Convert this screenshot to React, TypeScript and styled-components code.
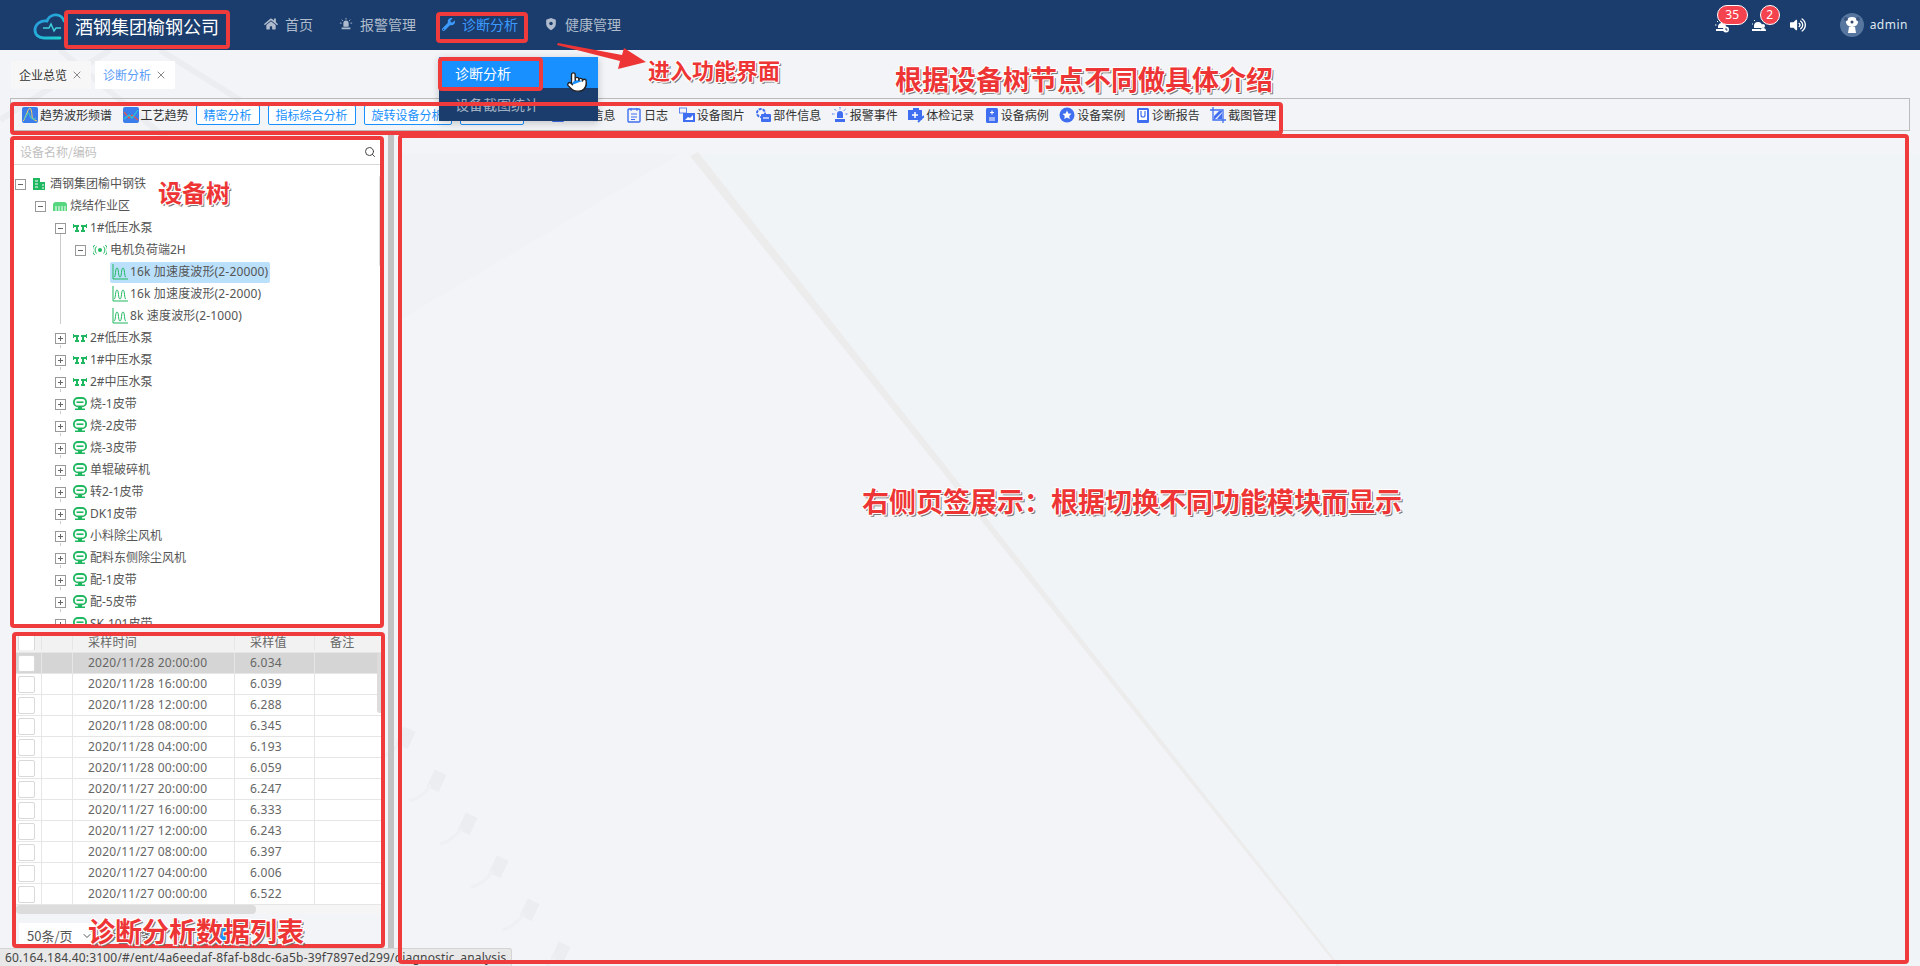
import React, { ReactNode } from 'react'
import styled, { createGlobalStyle } from 'styled-components'
import { FaHome, FaWrench, FaVolumeUp } from 'react-icons/fa'
import { Pointer, Search, X, ChevronDown } from 'lucide-react'

const FONT = '"Noto Sans", "Noto Sans CJK SC", "Liberation Sans", sans-serif'
const CJK = '"Noto Sans CJK SC", sans-serif'
const NAVY = '#1a3d6d'
const BLUE = '#1890ff'
const ICON = '#3f6ff0'
const GREEN = '#1fb75f'

const GlobalStyle = createGlobalStyle`
  html, body { margin: 0; padding: 0; background: #f2f4f8; }
  * { box-sizing: border-box; }
`

const Page = styled.div`
  position: relative;
  width: 1920px;
  height: 966px;
  overflow: hidden;
  display: flex;
  flex-direction: column;
  font-family: ${FONT};
  font-size: 12px;
  line-height: 1;
  background: #f2f4f8;
`

const Backdrop = styled.svg`
  position: absolute;
  inset: 0;
`

// header
const Header = styled.header`
  position: relative;
  z-index: 2;
  flex: none;
  height: 50px;
  display: flex;
  align-items: center;
  padding-left: 32px;
  background: ${NAVY};
`
const Title = styled.div`
  width: 176px;
  padding-top: 2px;
  font-family: ${CJK};
  font-size: 18px;
  color: #fff;
`
const Nav = styled.nav`
  display: flex;
`
const NavItem = styled.div<{ $active?: boolean }>`
  display: flex;
  align-items: center;
  gap: 7px;
  height: 50px;
  padding: 0 13px 2px;
  font-family: ${CJK};
  font-size: 14px;
  color: ${p => (p.$active ? '#3d9bff' : 'rgba(255,255,255,.66)')};
`
const HeaderRight = styled.div`
  margin-left: auto;
  display: flex;
  align-items: center;
  padding-right: 12px;
`
const AlarmSlot = styled.div<{ $w: number }>`
  position: relative;
  width: ${p => p.$w}px;
  height: 24px;
  display: flex;
  align-items: center;
`
const Badge = styled.span<{ $left: number; $w: number }>`
  position: absolute;
  left: ${p => p.$left}px;
  top: -8px;
  width: ${p => p.$w}px;
  height: 20px;
  border-radius: 10px;
  background: #f5424f;
  border: 1px solid #fff;
  color: #fff;
  font-size: 12px;
  display: flex;
  align-items: center;
  justify-content: center;
`
const Avatar = styled.span`
  width: 24px;
  height: 24px;
  border-radius: 50%;
  margin: 0 6px 0 34px;
  background: #56759f;
  display: flex;
  align-items: center;
  justify-content: center;
`
const UserName = styled.span`
  color: #dfe7f1;
  font-size: 12px;
  letter-spacing: 0.5px;
`

// dropdown from the nav
const Dropdown = styled.div`
  position: absolute;
  z-index: 3;
  left: 439px;
  top: 57px;
  width: 159px;
  height: 64px;
  background: ${NAVY};
  box-shadow: 0 2px 8px rgba(0, 0, 0, 0.2);
  font-family: ${CJK};
  font-size: 14px;
`
const DropItem = styled.div<{ $active?: boolean }>`
  height: 31px;
  padding-left: 16px;
  display: flex;
  align-items: center;
  color: ${p => (p.$active ? '#fff' : 'rgba(255,255,255,.6)')};
  background: ${p => (p.$active ? BLUE : 'transparent')};
`
const HandCursor = styled.span`
  position: absolute;
  z-index: 6;
  left: 566px;
  top: 71px;
  display: flex;
`

// tabs
const TabBar = styled.div`
  position: relative;
  flex: none;
  display: flex;
  gap: 4px;
  padding: 11px 0 0 11px;
  height: 39px;
`
const Tab = styled.div<{ $active?: boolean }>`
  width: 80px;
  height: 28px;
  display: flex;
  align-items: center;
  justify-content: space-between;
  padding: 0 8px;
  font-family: ${CJK};
  background: ${p => (p.$active ? '#fff' : '#f7f7f7')};
  color: ${p => (p.$active ? '#5a9cf8' : '#333')};
  svg {
    color: #888;
  }
`

// toolbar
const Toolbar = styled.div`
  position: relative;
  flex: none;
  margin: 9px 10px 0;
  height: 33px;
  display: flex;
  align-items: center;
  padding-left: 11px;
  border: 1px solid #bbb;
  font-family: ${CJK};
  color: #333;
`
const ToolItem = styled.div<{ $gap?: number; $push?: number }>`
  display: flex;
  align-items: center;
  gap: 2px;
  margin-right: ${p => p.$gap ?? 10.5}px;
  margin-left: ${p => p.$push ?? 0}px;
  white-space: nowrap;
`
const ToolButton = styled.div`
  height: 20px;
  padding: 0 7px;
  margin-right: 8px;
  display: flex;
  align-items: center;
  border: 1px solid ${BLUE};
  border-radius: 2px;
  color: ${BLUE};
  background: #fff;
  white-space: nowrap;
`

// main row
const Main = styled.main`
  position: relative;
  flex: 1;
  display: flex;
  padding-left: 14px;
  min-height: 0;
`
const LeftPane = styled.div`
  width: 374px;
  display: flex;
  flex-direction: column;
`
const Splitter = styled.div`
  width: 6px;
  height: 815px;
  margin-top: 2px;
  background: #c2c2c2;
`
const TreePane = styled.section`
  height: 486px;
  width: 366px;
  margin-top: 9px;
  background: #fff;
  display: flex;
  flex-direction: column;
  position: relative;
`
const SearchBox = styled.div`
  flex: none;
  height: 25px;
  display: flex;
  align-items: center;
  justify-content: space-between;
  padding: 0 4px 0 6px;
  border-bottom: 1px solid #d9d9d9;
  color: #bfbfbf;
  font-family: ${CJK};
  svg {
    color: #444;
  }
`
const TreeBody = styled.div`
  flex: 1;
  overflow: hidden;
  padding-top: 8px;
  position: relative;
  margin-left: -14px;
  padding-left: 0;
`
const TreeRow = styled.div<{ $level: number }>`
  height: 22px;
  display: flex;
  align-items: center;
  padding-left: ${p => 15 + 20 * p.$level}px;
  color: #555;
  white-space: nowrap;
`
const ExpandBox = styled.span<{ $open: boolean }>`
  position: relative;
  flex: none;
  width: 11px;
  height: 11px;
  margin-right: 7px;
  border: 1px solid #999;
  background: #fff;
  &::before {
    content: '';
    position: absolute;
    left: 2px;
    top: 4px;
    width: 5px;
    height: 1px;
    background: #666;
  }
  &::after {
    content: '';
    position: absolute;
    display: ${p => (p.$open ? 'none' : 'block')};
    left: 4px;
    top: 2px;
    width: 1px;
    height: 5px;
    background: #666;
  }
`
const Guide = styled.span<{ $h: number; $left: number }>`
  position: absolute;
  left: ${p => p.$left}px;
  top: 17px;
  width: 1px;
  height: ${p => p.$h}px;
  background: #ccc;
`
const RowDots = styled.span<{ $left: number }>`
  position: absolute;
  left: ${p => p.$left}px;
  top: 18px;
  width: 1px;
  height: 3px;
  background: #ccc;
`
const RowWrap = styled.div`
  position: relative;
`
const IconSlot = styled.span`
  flex: none;
  width: 16px;
  height: 16px;
  margin-right: 1px;
  display: flex;
  align-items: center;
`
const Leaf = styled.div<{ $selected?: boolean }>`
  display: flex;
  align-items: center;
  gap: 2px;
  height: 21px;
  margin-left: 95px;
  padding: 0 2px;
  border-radius: 2px;
  letter-spacing: 0.15px;
  color: #555;
  background: ${p => (p.$selected ? '#bae0fb' : 'transparent')};
`
const ScrollThumb = styled.span<{ $top: number; $left: number; $h: number; $w?: number }>`
  position: absolute;
  top: ${p => p.$top}px;
  left: ${p => p.$left}px;
  width: ${p => p.$w ?? 6}px;
  height: ${p => p.$h}px;
  border-radius: 3px;
  background: #dcdcdc;
`

// table
const TablePane = styled.section`
  position: relative;
  margin-top: 9px;
  margin-left: 2px;
  width: 367px;
  height: 313px;
  display: flex;
  flex-direction: column;
`
const Row = styled.div<{ $head?: boolean; $selected?: boolean }>`
  flex: none;
  height: ${p => (p.$head ? 18 : 21)}px;
  padding-bottom: ${p => (p.$head ? 2 : 0)}px;
  display: grid;
  grid-template-columns: 26px 31px 162px 80px 1fr;
  border-bottom: 1px solid #e6e6e6;
  background: ${p => (p.$head ? '#f2f2f2' : p.$selected ? '#d5d5d5' : '#fff')};
  color: #666;
`
const Cell = styled.div<{ $pad?: number }>`
  display: flex;
  align-items: center;
  padding-left: ${p => p.$pad ?? 15}px;
  border-right: 1px solid #e6e6e6;
  overflow: hidden;
  font-family: ${FONT};
  letter-spacing: 0.25px;
`
const LastCell = styled(Cell)`
  border-right: none;
`
const CheckBox = styled.span`
  width: 17px;
  height: 17px;
  background: #fff;
  border: 1px solid #d9d9d9;
  border-radius: 2px;
`
const HScroll = styled.div`
  flex: none;
  height: 9px;
  background: #f5f5f5;
`
const HThumb = styled.div`
  width: 240px;
  height: 9px;
  border-radius: 4px;
  background: #dcdcdc;
`
const Pager = styled.div`
  flex: 1;
  display: flex;
  align-items: center;
  padding: 9px 0 0 3px;
  color: #555;
  font-family: ${CJK};
`
const PageSize = styled.div`
  width: 78px;
  height: 25px;
  display: flex;
  align-items: center;
  justify-content: space-between;
  padding: 0 4px 0 8px;
  font-size: 13px;
  background: #fff;
`
const PageTotal = styled.span`
  margin-left: 13px;
  width: 87px;
`
const PageCurrent = styled.span`
  width: 30px;
  height: 25px;
  background: ${BLUE};
  color: #fff;
  display: flex;
  align-items: center;
  justify-content: center;
`
const RightPane = styled.section`
  flex: 1;
`

// browser status bubble
const StatusBar = styled.div`
  position: absolute;
  z-index: 4;
  left: 0;
  bottom: 0;
  width: 512px;
  height: 18px;
  padding-left: 5px;
  display: flex;
  align-items: center;
  background: #e8e8e8;
  border: 1px solid #d4d4d4;
  border-left: none;
  border-bottom: none;
  border-top-right-radius: 3px;
  color: #444;
  font-size: 12px;
  letter-spacing: 0.19px;
  white-space: nowrap;
`

// the red markup drawn over the screenshot
const RedFrame = styled.div<{ $x: number; $y: number; $w: number; $h: number }>`
  position: absolute;
  z-index: 5;
  left: ${p => p.$x}px;
  top: ${p => p.$y}px;
  width: ${p => p.$w}px;
  height: ${p => p.$h}px;
  border: 4px solid #ef3b3b;
  border-radius: 4px;
  pointer-events: none;
`
const Note = styled.div<{ $x: number; $y: number; $size: number }>`
  position: absolute;
  z-index: 6;
  left: ${p => p.$x}px;
  top: ${p => p.$y}px;
  font-family: ${CJK};
  font-weight: 700;
  font-size: ${p => p.$size}px;
  line-height: 1;
  white-space: nowrap;
  color: #ee3535;
  text-shadow:
    -1px -1px 0 #fff, 1px -1px 0 #fff, -1px 1px 0 #fff, 1px 1px 0 #fff,
    2px 2px 0 #777;
`
const Arrow = styled.svg`
  position: absolute;
  z-index: 6;
  left: 556px;
  top: 40px;
`

// icons
const Svg = ({ children, w = 16, h = 16, vb = '0 0 16 16' }: { children: ReactNode; w?: number; h?: number; vb?: string }) => (
  <svg width={w} height={h} viewBox={vb} fill="none">
    {children}
  </svg>
)

const LogoMark = () => (
  <svg width={43} height={28} viewBox="0 0 43 28" fill="none" style={{ flex: 'none', marginTop: 3 }}>
    <defs>
      <linearGradient id="logo" x1="0" y1="0" x2="1" y2="1">
        <stop offset="0" stopColor="#2a8fe0" />
        <stop offset="1" stopColor="#1fd6d0" />
      </linearGradient>
    </defs>
    <path d="M32 8c-1-4-5-7-10-6-4 1-6 3-7 6-6-1-12 3-12 9 0 5 4 8 9 8h16" stroke="url(#logo)" strokeWidth="2.800" strokeLinecap="round" />
    <path d="M11 15h6l2-4 3 7 2-3h5" stroke="#3fd0dc" strokeWidth="1.500" />
  </svg>
)
const SirenNav = () => (
  <Svg w={14} h={14}>
    <path d="M5 7a3 3 0 0 1 6 0v4H5z M3 12h10v2H3z" fill="rgba(255,255,255,.66)" />
    <path d="M8 1v2M3 3l1.500 1.500M13 3l-1.500 1.500M1 7h2M13 7h2" stroke="rgba(255,255,255,.66)" />
  </Svg>
)
const ShieldNav = () => (
  <Svg w={14} h={14}>
    <path d="M8 1l5.500 2v5c0 3-2.500 5.500-5.500 7-3-1.500-5.500-4-5.500-7V3z" fill="rgba(255,255,255,.66)" />
    <circle cx="8" cy="7.500" r="2" fill={NAVY} />
  </Svg>
)
const AlarmClock = () => (
  <Svg>
    <path d="M4 10a4 4 0 0 1 8 0v1H4zM2 12h9v2H2z" fill="#fff" />
    <circle cx="12" cy="12.500" r="3" fill="#fff" />
    <path d="M12 11v2h1.500" stroke={NAVY} />
    <path d="M1 8h1.500M3 4l1 1" stroke="#fff" />
  </Svg>
)
const AlarmUser = () => (
  <Svg>
    <path d="M3 9a4 4 0 0 1 8 0v2H3zM1 12h8v2H1z" fill="#fff" />
    <circle cx="12" cy="9" r="2" fill="#fff" />
    <path d="M9 14a3 3 0 0 1 6 0z" fill="#fff" />
    <path d="M1 7h1M3 3l1 1" stroke="#fff" />
  </Svg>
)
const AvatarFace = () => (
  <Svg w={18} h={20} vb="0 0 18 20">
    <ellipse cx="9" cy="7" rx="6" ry="5" fill="#fff" />
    <circle cx="3" cy="4" r="2" fill="#3b5680" />
    <circle cx="15" cy="4" r="2" fill="#3b5680" />
    <circle cx="9" cy="7" r="1.500" fill="#33486a" />
    <path d="M6 12h6l1 6H5z" fill="#fff" />
  </Svg>
)

const TrendIcon = () => (
  <Svg>
    <rect width="16" height="16" rx="2" fill="#3b7dea" />
    <path d="M1 14c2-1 2-5 4-8 1-3 2-5 3-5s2 5 2 8 2 4 5 5" stroke="#f4d35e" strokeWidth="1" />
    <path d="M2 12c2-2 3-5 4-6s2 4 3 5 3 2 5 0" stroke="#3fd7c0" strokeWidth="1" />
  </Svg>
)
const ProcessIcon = () => (
  <Svg>
    <rect width="16" height="16" rx="2" fill="#3b7dea" />
    <path d="M1 5l5 6 3-3 6 5" stroke="#e4574c" strokeWidth="1.200" />
    <path d="M1 12l5-4 3 3 6-8" stroke="#25c7d9" strokeWidth="1.200" />
  </Svg>
)
const BaseIcon = () => (
  <Svg>
    <rect x="2" y="1" width="12" height="14" rx="1" fill={ICON} />
  </Svg>
)
const LogIcon = () => (
  <Svg>
    <rect x="2" y="2" width="12" height="13" rx="1" stroke={ICON} strokeWidth="1.400" />
    <path d="M5 1v3M11 1v3M5 7h6M5 10h6M5 12.500h4" stroke={ICON} />
  </Svg>
)
const PictureIcon = () => (
  <Svg>
    <rect x="0.500" y="1" width="7" height="5" fill="none" stroke={ICON} strokeWidth="0.800" />
    <path d="M4 6h12v9H4z" fill={ICON} />
    <path d="M6 13l3-3 2 1 3-3v5z" fill="#fff" />
  </Svg>
)
const PartIcon = () => (
  <Svg>
    <circle cx="6" cy="6" r="4" stroke={ICON} strokeWidth="2" strokeDasharray="3 1" />
    <rect x="6" y="7" width="10" height="8" rx="1" fill={ICON} />
    <path d="M8 11h6" stroke="#fff" strokeWidth="1.200" />
  </Svg>
)
const AlarmIcon = () => (
  <Svg>
    <path d="M5 11V7a3 3 0 0 1 6 0v4z M3 12h10v3H3z" fill={ICON} />
    <path d="M8 0v2.500M2.500 2l2 2M13.500 2l-2 2M0 7h2.500M13.500 7H16" stroke={ICON} strokeDasharray="1.500 .5" />
  </Svg>
)
const CheckupIcon = () => (
  <Svg>
    <path d="M5 3V1h6v2M0 3h14v10H0z" fill={ICON} />
    <path d="M7 5v6M4 8h6" stroke="#fff" strokeWidth="1.500" />
    <path d="M10 15l6-6" stroke={ICON} strokeWidth="1.800" />
  </Svg>
)
const CaseBookIcon = () => (
  <Svg w={14} vb="0 0 14 16">
    <rect x="1" y="1" width="12" height="15" rx="1.500" fill={ICON} />
    <path d="M5 5.500h4M7 3.500v4M4 11h6M4 13h6" stroke="#fff" strokeWidth="1.100" />
  </Svg>
)
const StarIcon = () => (
  <Svg>
    <circle cx="8" cy="8" r="7.500" fill={ICON} />
    <path d="M8 3.500l1.400 2.900 3.100.400-2.300 2.100.600 3.100L8 10.500l-2.800 1.500.600-3.100-2.300-2.100 3.100-.400z" fill="#fff" />
  </Svg>
)
const ReportIcon = () => (
  <Svg w={14} vb="0 0 14 16">
    <rect x="1" y="1" width="12" height="15" rx="1.500" fill={ICON} />
    <rect x="3" y="3" width="8" height="10" fill="#fff" />
    <path d="M5 4v4a2 2 0 0 0 4 0V4" stroke={ICON} strokeWidth="1.200" />
  </Svg>
)
const CropIcon = () => (
  <Svg>
    <path d="M3 0v13h13M0 3h13v13" stroke={ICON} strokeWidth="1.300" />
    <path d="M4 13V9l5-5h3v1z M12 6v6H7z" fill={ICON} />
  </Svg>
)

const PlantIcon = () => (
  <Svg w={12} h={14} vb="0 0 12 14">
    <path d="M0 1h7v12H0zM7 5h5v8H7z" fill={GREEN} />
    <path d="M2 4h3M2 7h3M2 10h3M9 8h2M9 11h2" stroke="#fff" />
  </Svg>
)
const AreaIcon = () => (
  <Svg w={14} h={10} vb="0 0 14 10">
    <path d="M0 10V4a3 3 0 0 1 3-3h8a3 3 0 0 1 3 3v6z" fill="#55d67f" />
    <path d="M3 5v5M6 5v5M9 5v5M12 5v5" stroke="#fff" />
  </Svg>
)
const PumpIcon = () => (
  <Svg w={14} h={10} vb="0 0 14 10">
    <path d="M0 1h1v1h5v2H5v3h1v2H2V7h1V4H1v1H0zM8 2h5V1h1v4h-1V4h-2v3h1v2H8V7h1V4H8z" fill={GREEN} />
  </Svg>
)
const SensorIcon = () => (
  <Svg w={14} h={10} vb="0 0 14 10">
    <circle cx="7" cy="5" r="2" fill={GREEN} />
    <path d="M3.500 1.500a5 5 0 0 0 0 7M10.500 1.500a5 5 0 0 1 0 7M1.500 0a8 8 0 0 0 0 10M12.500 0a8 8 0 0 1 0 10" stroke={GREEN} strokeWidth="1" />
  </Svg>
)
const WaveIcon = () => (
  <Svg>
    <path d="M1 0v15h15" stroke={GREEN} />
    <path d="M2 13c2 0 1-9 3-9s1 9 3 9 1-9 3-9 1 9 3 9" stroke={GREEN} />
  </Svg>
)
const BeltIcon = () => (
  <Svg w={14} h={14} vb="0 0 14 14">
    <rect x="0.900" y="1" width="12.200" height="8.400" rx="4" stroke={GREEN} strokeWidth="1.800" />
    <path d="M3.500 5.200h7" stroke={GREEN} strokeWidth="1.600" />
    <path d="M5 9.500h4v2h3v1.500H2v-1.500h3z" fill={GREEN} />
  </Svg>
)

type TreeItem = { level: number; label: string; icon: ReactNode; open?: boolean; guide?: number }

const treeTop: TreeItem[] = [
  { level: 0, label: '酒钢集团榆中钢铁', icon: <PlantIcon />, open: true },
  { level: 1, label: '烧结作业区', icon: <AreaIcon />, open: true },
  { level: 2, label: '1#低压水泵', icon: <PumpIcon />, open: true, guide: 90 },
  { level: 3, label: '电机负荷端2H', icon: <SensorIcon />, open: true },
]
const leaves = ['16k 加速度波形(2-20000)', '16k 加速度波形(2-2000)', '8k 速度波形(2-1000)']
const treeRest: TreeItem[] = [
  { level: 2, label: '2#低压水泵', icon: <PumpIcon /> },
  { level: 2, label: '1#中压水泵', icon: <PumpIcon /> },
  { level: 2, label: '2#中压水泵', icon: <PumpIcon /> },
  ...['烧-1皮带', '烧-2皮带', '烧-3皮带', '单辊破碎机', '转2-1皮带', 'DK1皮带', '小料除尘风机', '配料东侧除尘风机', '配-1皮带', '配-5皮带', 'SK-101皮带'].map(label => ({
    level: 2,
    label,
    icon: <BeltIcon />,
  })),
]

const samples = [
  ['2020/11/28 20:00:00', '6.034'],
  ['2020/11/28 16:00:00', '6.039'],
  ['2020/11/28 12:00:00', '6.288'],
  ['2020/11/28 08:00:00', '6.345'],
  ['2020/11/28 04:00:00', '6.193'],
  ['2020/11/28 00:00:00', '6.059'],
  ['2020/11/27 20:00:00', '6.247'],
  ['2020/11/27 16:00:00', '6.333'],
  ['2020/11/27 12:00:00', '6.243'],
  ['2020/11/27 08:00:00', '6.397'],
  ['2020/11/27 04:00:00', '6.006'],
  ['2020/11/27 00:00:00', '6.522'],
]

const TreeNode = ({ item }: { item: TreeItem }) => (
  <RowWrap>
    <TreeRow $level={item.level}>
      <ExpandBox $open={!!item.open} />
      <IconSlot>{item.icon}</IconSlot>
      {item.label}
    </TreeRow>
    {item.guide && <Guide $h={item.guide} $left={20 + 20 * item.level} />}
    {item.level === 2 && !item.open && <RowDots $left={60} />}
  </RowWrap>
)

export default function App() {
  return (
    <Page>
      <GlobalStyle />
      <Backdrop width={1920} height={966}>
        <polygon points="693,154 1920,154 1920,966 1340,966" fill="#f0f4f7" />
        <polygon points="400,320 680,154 400,154" fill="#f0f2f5" />
        <polygon points="690,156 698,152 1340,966 1337,966" fill="#edecec" />
        {[0, 1, 2, 3, 4, 5].map(i => (
          <g key={i}>
            <rect x={399 + i * 31} y={728 + i * 43} width={13} height={19} fill="#ebedf0" transform={`rotate(25 ${405 + i * 31} ${738 + i * 43})`} />
            <path d={`M${400 + i * 31} ${742 + i * 43}c-6 8-12 14-22 16`} stroke="#eef0f3" strokeWidth="3" fill="none" />
          </g>
        ))}
        <path d="M60 50L240 200M240 100L160 50M0 120L110 50" stroke="#ecedf1" strokeWidth="6" fill="none" />
      </Backdrop>

      <Header>
        <LogoMark />
        <Title>酒钢集团榆钢公司</Title>
        <Nav>
          <NavItem><FaHome size={14} />首页</NavItem>
          <NavItem><SirenNav />报警管理</NavItem>
          <NavItem $active><FaWrench size={13} />诊断分析</NavItem>
          <NavItem><ShieldNav />健康管理</NavItem>
        </Nav>
        <HeaderRight>
          <AlarmSlot $w={37}>
            <AlarmClock />
            <Badge $left={3} $w={31}>35</Badge>
          </AlarmSlot>
          <AlarmSlot $w={39}>
            <AlarmUser />
            <Badge $left={9} $w={20}>2</Badge>
          </AlarmSlot>
          <FaVolumeUp size={16} color="#fff" />
          <Avatar><AvatarFace /></Avatar>
          <UserName>admin</UserName>
        </HeaderRight>
      </Header>

      <TabBar>
        <Tab>企业总览<X size={12} /></Tab>
        <Tab $active>诊断分析<X size={12} /></Tab>
      </TabBar>

      <Toolbar>
        <ToolItem><TrendIcon />趋势波形频谱</ToolItem>
        <ToolItem $gap={7}><ProcessIcon />工艺趋势</ToolItem>
        <ToolButton>精密分析</ToolButton>
        <ToolButton>指标综合分析</ToolButton>
        <ToolButton>旋转设备分析</ToolButton>
        <ToolButton>趋势分析</ToolButton>
        <ToolItem $push={18}><BaseIcon />设备信息</ToolItem>
        <ToolItem><LogIcon />日志</ToolItem>
        <ToolItem><PictureIcon />设备图片</ToolItem>
        <ToolItem><PartIcon />部件信息</ToolItem>
        <ToolItem><AlarmIcon />报警事件</ToolItem>
        <ToolItem><CheckupIcon />体检记录</ToolItem>
        <ToolItem><CaseBookIcon />设备病例</ToolItem>
        <ToolItem><StarIcon />设备案例</ToolItem>
        <ToolItem><ReportIcon />诊断报告</ToolItem>
        <ToolItem><CropIcon />截图管理</ToolItem>
      </Toolbar>

      <Main>
        <LeftPane>
          <TreePane>
            <SearchBox>设备名称/编码<Search size={12} /></SearchBox>
            <TreeBody>
              {treeTop.map(item => <TreeNode key={item.label} item={item} />)}
              {leaves.map((label, i) => (
                <TreeRow key={label} $level={0}>
                  <Leaf $selected={i === 0}><WaveIcon />{label}</Leaf>
                </TreeRow>
              ))}
              {treeRest.map(item => <TreeNode key={item.label} item={item} />)}
              <ScrollThumb $top={10} $left={379} $h={92} />
            </TreeBody>
          </TreePane>
          <TablePane>
            <Row $head>
              <Cell $pad={2}><CheckBox /></Cell>
              <Cell />
              <Cell>采样时间</Cell>
              <Cell>采样值</Cell>
              <LastCell>备注</LastCell>
            </Row>
            {samples.map(([time, value], i) => (
              <Row key={time} $selected={i === 0}>
                <Cell $pad={2}><CheckBox /></Cell>
                <Cell />
                <Cell>{time}</Cell>
                <Cell>{value}</Cell>
                <LastCell />
              </Row>
            ))}
            <HScroll><HThumb /></HScroll>
            <Pager>
              <PageSize>50条/页<ChevronDown size={12} /></PageSize>
              <PageTotal>共 50 条</PageTotal>
              <PageCurrent>1</PageCurrent>
            </Pager>
            <ScrollThumb $top={18} $left={361} $h={60} />
          </TablePane>
        </LeftPane>
        <Splitter />
        <RightPane />
      </Main>

      <Dropdown>
        <DropItem $active>诊断分析</DropItem>
        <DropItem>设备截图统计</DropItem>
      </Dropdown>
      <HandCursor><Pointer size={22} fill="#fff" color="#222" strokeWidth={1.500} /></HandCursor>

      <StatusBar>60.164.184.40:3100/#/ent/4a6eedaf-8faf-b8dc-6a5b-39f7897ed299/diagnostic_analysis</StatusBar>

      <RedFrame $x={64} $y={10} $w={166} $h={39} />
      <RedFrame $x={436} $y={12} $w={92} $h={31} />
      <RedFrame $x={438} $y={57} $w={105} $h={34} />
      <RedFrame $x={10} $y={102} $w={1273} $h={33} />
      <RedFrame $x={10} $y={136} $w={374} $h={492} />
      <RedFrame $x={12} $y={632} $w={373} $h={316} />
      <RedFrame $x={398} $y={134} $w={1511} $h={830} />

      <Arrow width={92} height={30} viewBox="0 0 92 30">
        <polygon points="2,3 66,15 68,8 90,22 62,29 64,21 1,5" fill="#ee3535" />
      </Arrow>
      <Note $x={648} $y={58} $size={22}>进入功能界面</Note>
      <Note $x={895} $y={65} $size={27}>根据设备树节点不同做具体介绍</Note>
      <Note $x={158} $y={180} $size={24}>设备树</Note>
      <Note $x={862} $y={487} $size={27}>右侧页签展示：根据切换不同功能模块而显示</Note>
      <Note $x={88} $y={917} $size={27}>诊断分析数据列表</Note>
    </Page>
  )
}
